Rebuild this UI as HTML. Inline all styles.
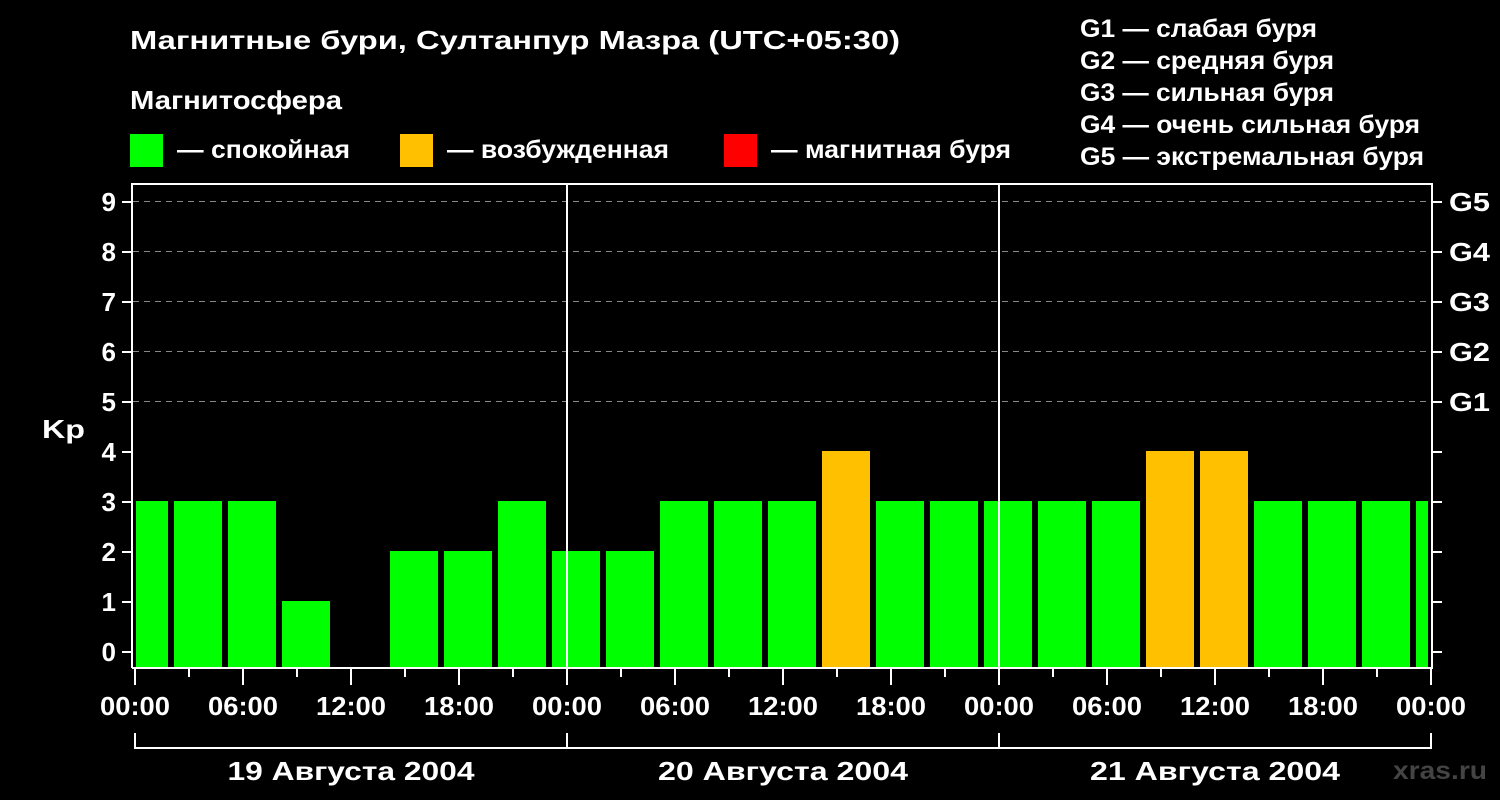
<!DOCTYPE html><html><head><meta charset="utf-8"><style>body{margin:0;background:#000}svg{display:block}text{font-family:"Liberation Sans",sans-serif;font-weight:bold;fill:#fff}</style></head><body>
<svg width="1500" height="800" xmlns="http://www.w3.org/2000/svg">
<rect width="1500" height="800" fill="#000"/>
<text x="130" y="49" font-size="26" textLength="770" lengthAdjust="spacingAndGlyphs">Магнитные бури, Султанпур Мазра (UTC+05:30)</text>
<text x="130" y="109" font-size="26" textLength="212" lengthAdjust="spacingAndGlyphs">Магнитосфера</text>
<rect x="130" y="134" width="33" height="33" fill="#00ff00"/><text x="177" y="158" font-size="25" textLength="173" lengthAdjust="spacingAndGlyphs">— спокойная</text>
<rect x="400" y="134" width="33" height="33" fill="#ffc000"/><text x="447" y="158" font-size="25" textLength="222" lengthAdjust="spacingAndGlyphs">— возбужденная</text>
<rect x="724" y="134" width="33" height="33" fill="#ff0000"/><text x="771" y="158" font-size="25" textLength="240" lengthAdjust="spacingAndGlyphs">— магнитная буря</text>
<g font-size="25"><text x="1080" y="37" textLength="237" lengthAdjust="spacingAndGlyphs">G1 — слабая буря</text><text x="1080" y="69" textLength="254" lengthAdjust="spacingAndGlyphs">G2 — средняя буря</text><text x="1080" y="101" textLength="254" lengthAdjust="spacingAndGlyphs">G3 — сильная буря</text><text x="1080" y="133" textLength="340" lengthAdjust="spacingAndGlyphs">G4 — очень сильная буря</text><text x="1080" y="165" textLength="344" lengthAdjust="spacingAndGlyphs">G5 — экстремальная буря</text></g>
<g stroke="#888" stroke-dasharray="6,5" stroke-width="1">
<line x1="133" y1="201.5" x2="1432" y2="201.5"/><line x1="133" y1="251.5" x2="1432" y2="251.5"/><line x1="133" y1="301.5" x2="1432" y2="301.5"/><line x1="133" y1="351.5" x2="1432" y2="351.5"/><line x1="133" y1="401.5" x2="1432" y2="401.5"/></g>
<g fill="#00ff00">
<rect x="136" y="501" width="32" height="167"/><rect x="174" y="501" width="48" height="167"/><rect x="228" y="501" width="48" height="167"/><rect x="282" y="601" width="48" height="67"/>
<rect x="390" y="551" width="48" height="117"/><rect x="444" y="551" width="48" height="117"/><rect x="498" y="501" width="48" height="167"/><rect x="552" y="551" width="48" height="117"/><rect x="606" y="551" width="48" height="117"/>
<rect x="660" y="501" width="48" height="167"/><rect x="714" y="501" width="48" height="167"/><rect x="768" y="501" width="48" height="167"/>
<rect x="876" y="501" width="48" height="167"/><rect x="930" y="501" width="48" height="167"/><rect x="984" y="501" width="48" height="167"/><rect x="1038" y="501" width="48" height="167"/><rect x="1092" y="501" width="48" height="167"/>
<rect x="1254" y="501" width="48" height="167"/><rect x="1308" y="501" width="48" height="167"/><rect x="1362" y="501" width="48" height="167"/><rect x="1416" y="501" width="12" height="167"/></g>
<g fill="#ffc000"><rect x="822" y="451" width="48" height="217"/><rect x="1146" y="451" width="48" height="217"/><rect x="1200" y="451" width="48" height="217"/></g>
<g stroke="#fff" stroke-width="2" fill="none">
<path d="M132 668V184H1432V668H132"/>
<line x1="567" y1="183" x2="567" y2="668"/><line x1="999" y1="183" x2="999" y2="668"/>
<path d="M122 202h10M122 252h10M122 302h10M122 352h10M122 402h10M122 452h10M122 502h10M122 552h10M122 602h10M122 652h10"/>
<path d="M1432 202h10M1432 252h10M1432 302h10M1432 352h10M1432 402h10M1432 452h10M1432 502h10M1432 552h10M1432 602h10M1432 652h10"/>
<path d="M135 668v17M243 668v17M351 668v17M459 668v17M567 668v17M675 668v17M783 668v17M891 668v17M999 668v17M1107 668v17M1215 668v17M1323 668v17M1431 668v17"/>
<path d="M189 668v9M297 668v9M405 668v9M513 668v9M621 668v9M729 668v9M837 668v9M945 668v9M1053 668v9M1161 668v9M1269 668v9M1377 668v9"/>
<path d="M135 733v16M567 733v16M999 733v16M1431 733v16M135 748H1431"/>
</g>
<g font-size="26" text-anchor="end"><text x="116" y="211">9</text><text x="116" y="261">8</text><text x="116" y="311">7</text><text x="116" y="361">6</text><text x="116" y="411">5</text><text x="116" y="461">4</text><text x="116" y="511">3</text><text x="116" y="561">2</text><text x="116" y="611">1</text><text x="116" y="661">0</text></g>
<text x="42" y="438" font-size="26" textLength="43" lengthAdjust="spacingAndGlyphs">Kp</text>
<g font-size="26"><text x="1449" y="211" textLength="41" lengthAdjust="spacingAndGlyphs">G5</text><text x="1449" y="261" textLength="41" lengthAdjust="spacingAndGlyphs">G4</text><text x="1449" y="311" textLength="41" lengthAdjust="spacingAndGlyphs">G3</text><text x="1449" y="361" textLength="41" lengthAdjust="spacingAndGlyphs">G2</text><text x="1449" y="411" textLength="41" lengthAdjust="spacingAndGlyphs">G1</text></g>
<g font-size="26" text-anchor="middle"><text x="135" y="715" textLength="70" lengthAdjust="spacingAndGlyphs">00:00</text><text x="243" y="715" textLength="70" lengthAdjust="spacingAndGlyphs">06:00</text><text x="351" y="715" textLength="70" lengthAdjust="spacingAndGlyphs">12:00</text><text x="459" y="715" textLength="70" lengthAdjust="spacingAndGlyphs">18:00</text><text x="567" y="715" textLength="70" lengthAdjust="spacingAndGlyphs">00:00</text><text x="675" y="715" textLength="70" lengthAdjust="spacingAndGlyphs">06:00</text><text x="783" y="715" textLength="70" lengthAdjust="spacingAndGlyphs">12:00</text><text x="891" y="715" textLength="70" lengthAdjust="spacingAndGlyphs">18:00</text><text x="999" y="715" textLength="70" lengthAdjust="spacingAndGlyphs">00:00</text><text x="1107" y="715" textLength="70" lengthAdjust="spacingAndGlyphs">06:00</text><text x="1215" y="715" textLength="70" lengthAdjust="spacingAndGlyphs">12:00</text><text x="1323" y="715" textLength="70" lengthAdjust="spacingAndGlyphs">18:00</text><text x="1431" y="715" textLength="70" lengthAdjust="spacingAndGlyphs">00:00</text>
<text x="351" y="780" textLength="247" lengthAdjust="spacingAndGlyphs">19 Августа 2004</text><text x="783" y="780" textLength="250" lengthAdjust="spacingAndGlyphs">20 Августа 2004</text><text x="1215" y="780" textLength="250" lengthAdjust="spacingAndGlyphs">21 Августа 2004</text></g>
<text x="1393" y="779" font-size="25" textLength="94" lengthAdjust="spacingAndGlyphs" style="fill:#444">xras.ru</text>
</svg></body></html>
